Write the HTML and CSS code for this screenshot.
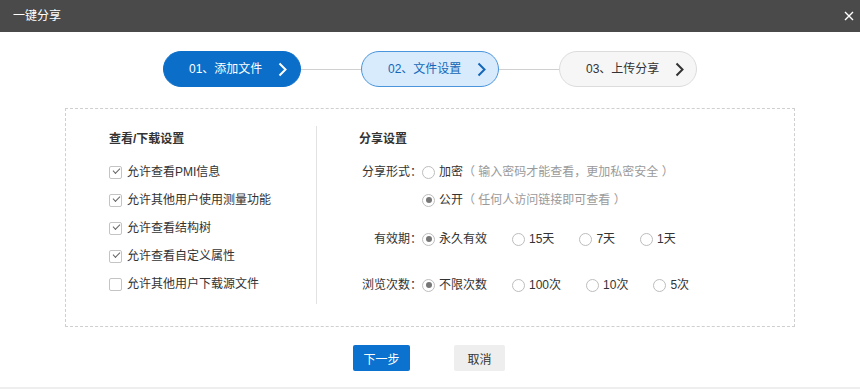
FILE: index.html
```html
<!DOCTYPE html>
<html lang="zh-CN">
<head>
  <meta charset="UTF-8">
  <title>一键分享</title>
  <link rel="stylesheet" href="styles.css">
</head>
<body>
  <div class="header">
    <span class="title">一键分享</span>
    <svg class="close" width="10" height="10" viewBox="0 0 10 10"><path d="M1 1L9 9M9 1L1 9" stroke="#fff" stroke-width="1.4"/></svg>
  </div>

  <div class="steps">
    <div class="step done">
      <span>01、添加文件</span>
      <svg width="9" height="15" viewBox="0 0 9 15"><path d="M1.5 1.5L7.5 7.5L1.5 13.5" fill="none" stroke="currentColor" stroke-width="2"/></svg>
    </div>
    <div class="line"></div>
    <div class="step active">
      <span>02、文件设置</span>
      <svg width="9" height="15" viewBox="0 0 9 15"><path d="M1.5 1.5L7.5 7.5L1.5 13.5" fill="none" stroke="currentColor" stroke-width="2"/></svg>
    </div>
    <div class="line"></div>
    <div class="step">
      <span>03、上传分享</span>
      <svg width="9" height="15" viewBox="0 0 9 15"><path d="M1.5 1.5L7.5 7.5L1.5 13.5" fill="none" stroke="currentColor" stroke-width="2"/></svg>
    </div>
  </div>

  <div class="panel">
    <div class="col-left">
      <div class="sec-title">查看/下载设置</div>
      <label class="check on"><i></i>允许查看PMI信息</label>
      <label class="check on"><i></i>允许其他用户使用测量功能</label>
      <label class="check on"><i></i>允许查看结构树</label>
      <label class="check on"><i></i>允许查看自定义属性</label>
      <label class="check"><i></i>允许其他用户下载源文件</label>
    </div>
    <div class="divider"></div>
    <div class="col-right">
      <div class="sec-title">分享设置</div>
      <div class="row">
        <span class="lbl">分享形式：</span>
        <span class="radio"><i></i>加密<em>（ 输入密码才能查看，更加私密安全 ）</em></span>
      </div>
      <div class="row">
        <span class="lbl"></span>
        <span class="radio on"><i></i>公开<em>（ 任何人访问链接即可查看 ）</em></span>
      </div>
      <div class="row gap1">
        <span class="lbl">有效期：</span>
        <span class="radio on"><i></i>永久有效</span>
        <span class="radio"><i></i>15天</span>
        <span class="radio"><i></i>7天</span>
        <span class="radio"><i></i>1天</span>
      </div>
      <div class="row gap2">
        <span class="lbl">浏览次数：</span>
        <span class="radio on"><i></i>不限次数</span>
        <span class="radio"><i></i>100次</span>
        <span class="radio"><i></i>10次</span>
        <span class="radio"><i></i>5次</span>
      </div>
    </div>
  </div>

  <div class="actions">
    <button class="btn primary">下一步</button>
    <button class="btn">取消</button>
  </div>
  <div class="bottom"></div>
</body>
</html>
```

FILE: styles.css
```css
body {
  margin: 0;
  font-family: "Liberation Sans", "Noto Sans CJK SC", sans-serif;
  font-size: 12px;
  color: #333;
  background: #fff;
}
.header {
  height: 32px;
  background: #4a4a4a;
  display: flex;
  align-items: center;
  justify-content: space-between;
  padding: 0 6px 0 13px;
}
.header .title {
  color: #fff;
  font-size: 12px;
  line-height: 16px;
}
.close {
  display: block;
}
.steps {
  display: flex;
  justify-content: center;
  align-items: center;
  margin-top: 19px;
}
.step {
  box-sizing: border-box;
  width: 138px;
  height: 36px;
  border-radius: 18px;
  border: 1px solid #dcdcdc;
  background: #f6f6f6;
  color: #333;
  display: flex;
  align-items: center;
  padding: 0 12px 0 26px;
  line-height: 16px;
}
.step svg {
  margin-left: auto;
  display: block;
}
.step.done {
  background: #0b6fc9;
  border-color: #0b6fc9;
  color: #fff;
  padding-left: 25px;
  padding-right: 13px;
}
.step.active {
  background: #d7ebfd;
  border-color: #4a95dc;
  color: #1467b8;
}
.line {
  width: 60px;
  height: 1px;
  background: #d0d0d0;
}
.panel {
  box-sizing: border-box;
  margin: 21px 65px 0;
  height: 219px;
  border: 1px dashed #cfcfcf;
  display: flex;
  padding: 17px 0 0 43px;
}
.col-left {
  width: 207px;
}
.divider {
  width: 1px;
  height: 178px;
  background: #e2e2e2;
}
.col-right {
  padding-left: 42px;
}
.sec-title {
  font-weight: bold;
  line-height: 20px;
  margin: 3px 0 9px;
}
.check {
  display: flex;
  align-items: center;
  height: 28px;
  line-height: 16px;
}
.check i {
  box-sizing: border-box;
  width: 13px;
  height: 13px;
  border: 1px solid #c4c4c4;
  border-radius: 2px;
  margin-right: 5px;
  position: relative;
}
.check.on i::after {
  content: "";
  position: absolute;
  left: 2.5px;
  top: 1.5px;
  width: 6px;
  height: 3px;
  border-left: 1.5px solid #666;
  border-bottom: 1.5px solid #666;
  transform: rotate(-45deg);
}
.row {
  display: flex;
  align-items: center;
  height: 28px;
  line-height: 16px;
}
.row.gap1 {
  margin-top: 11px;
}
.row.gap2 {
  margin-top: 18px;
}
.lbl {
  width: 63px;
  text-align: right;
}
.radio {
  display: flex;
  align-items: center;
  margin-right: 25px;
}
.radio i {
  box-sizing: border-box;
  width: 13px;
  height: 13px;
  border: 1px solid #bdbdbd;
  border-radius: 50%;
  margin-right: 4px;
  display: flex;
  align-items: center;
  justify-content: center;
}
.radio.on i::after {
  content: "";
  width: 6px;
  height: 6px;
  border-radius: 50%;
  background: #777;
}
.radio em {
  font-style: normal;
  color: #9a9a9a;
}
.actions {
  display: flex;
  justify-content: center;
  gap: 44px;
  margin-top: 18px;
  padding-right: 2px;
}
.btn {
  height: 26px;
  border: none;
  border-radius: 2px;
  background: #eeeeee;
  color: #333;
  font-family: inherit;
  font-size: 12px;
  width: 51px;
  padding: 0;
  cursor: pointer;
}
.btn.primary {
  width: 57px;
  background: #0b72cf;
  color: #fff;
}
.bottom {
  margin-top: 16px;
  height: 2px;
  background: #eeeeee;
}
```
